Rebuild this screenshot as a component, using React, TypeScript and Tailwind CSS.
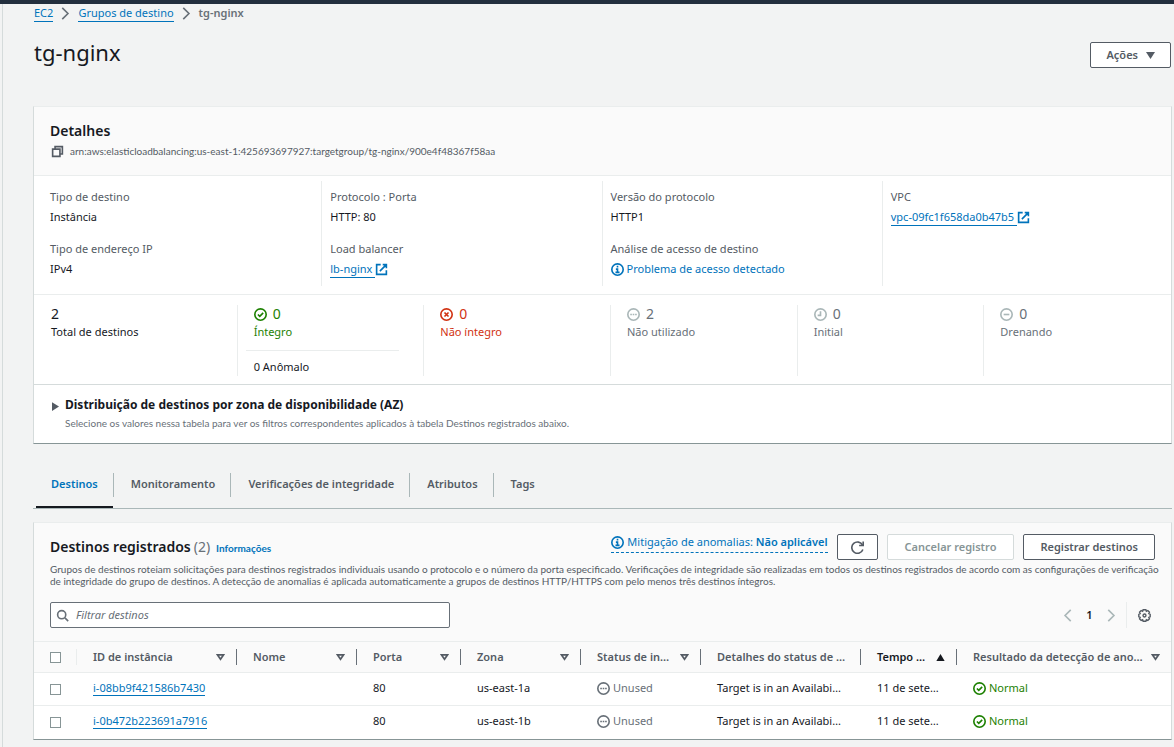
import { useState } from "react";
import type { ReactNode } from "react";
import { clsx } from "clsx";

type IconProps = { className?: string };

function Svg({ className, children }: IconProps & { children: ReactNode }) {
  return (
    <svg
      viewBox="0 0 16 16"
      fill="none"
      stroke="currentColor"
      strokeWidth="2"
      aria-hidden="true"
      className={clsx("shrink-0", className ?? "size-[13px]")}
    >
      {children}
    </svg>
  );
}

const CheckIcon = ({ className }: IconProps) => (
  <Svg className={className}>
    <circle cx="8" cy="8" r="7" />
    <path d="M4.8 8l2.3 2.3 4.2-4.3" />
  </Svg>
);

const ErrorIcon = ({ className }: IconProps) => (
  <Svg className={className}>
    <circle cx="8" cy="8" r="7" />
    <path d="M5.5 5.5l5 5M10.5 5.5l-5 5" />
  </Svg>
);

const DotsIcon = ({ className }: IconProps) => (
  <Svg className={className}>
    <circle cx="8" cy="8" r="7" />
    <path d="M4 8h2M7 8h2M10 8h2" />
  </Svg>
);

const MinusIcon = ({ className }: IconProps) => (
  <Svg className={className}>
    <circle cx="8" cy="8" r="7" />
    <path d="M4.5 8h7" />
  </Svg>
);

const ClockIcon = ({ className }: IconProps) => (
  <Svg className={className}>
    <circle cx="8" cy="8" r="7" />
    <path d="M8 4v5H4.5" />
  </Svg>
);

const InfoIcon = ({ className }: IconProps) => (
  <Svg className={className}>
    <circle cx="8" cy="8" r="7" />
    <path d="M8 3.5v2M6 7.5h2V12M5.5 11.5h5" />
  </Svg>
);

const ExternalIcon = ({ className }: IconProps) => (
  <Svg className={className}>
    <path d="M7 2H2v12h12V9M9.5 2H14v4.5M14 2L6 10" />
  </Svg>
);

const CopyIcon = ({ className }: IconProps) => (
  <Svg className={className}>
    <path d="M2 5h9v9H2z" />
    <path d="M5 5V2h9v9h-3" />
  </Svg>
);

const ChevronIcon = ({ className }: IconProps) => (
  <Svg className={className}>
    <path d="M4 1l7 7-7 7" />
  </Svg>
);

const SearchIcon = ({ className }: IconProps) => (
  <Svg className={className}>
    <circle cx="7" cy="7" r="5" />
    <path d="M11 11l4 4" />
  </Svg>
);

const RefreshIcon = ({ className }: IconProps) => (
  <Svg className={className}>
    <path d="M10 5.5h5v-5" />
    <path d="M14.2 5A7 7 0 1 0 14.6 10.5" />
  </Svg>
);

const GearIcon = ({ className }: IconProps) => (
  <Svg className={className}>
    <path
      strokeWidth="1.7"
      d="M6.3 1h3.4l.6 1.8 1.8-.8 2 2-.8 1.7 1.7.6v3.4l-1.7.6.8 1.8-2 2-1.8-.8-.6 1.7H6.3l-.6-1.7-1.8.8-2-2 .8-1.8L1 9.7V6.3l1.7-.6L1.9 4l2-2 1.8.8z"
    />
    <circle cx="8" cy="8" r="1.8" strokeWidth="1.7" />
  </Svg>
);

function SortIcon({ active }: { active?: boolean }) {
  return (
    <svg
      viewBox="0 0 10 8"
      fill={active ? "currentColor" : "none"}
      stroke="currentColor"
      strokeWidth="2"
      aria-hidden="true"
      className="h-[7px] w-[9px] shrink-0"
    >
      {active ? <path d="M2 7h6L5 2z" /> : <path d="M1.6 1h6.8L5 6z" />}
    </svg>
  );
}

const linkClass = "border-b border-[#0073bb] text-[#0073bb]";

const smallText = "font-[Lato,sans-serif] text-[10px]";

function ExternalLink({ children }: { children: ReactNode }) {
  return (
    <a href="#" className="flex items-center text-[#0073bb]">
      <span className="border-b border-[#0073bb] pr-[3px]">{children}</span>
      <ExternalIcon />
    </a>
  );
}

type Field = { label: string; value: ReactNode };

const detailColumns: Field[][] = [
  [
    { label: "Tipo de destino", value: "Instância" },
    { label: "Tipo de endereço IP", value: "IPv4" },
  ],
  [
    { label: "Protocolo : Porta", value: "HTTP: 80" },
    { label: "Load balancer", value: <ExternalLink>lb-nginx</ExternalLink> },
  ],
  [
    { label: "Versão do protocolo", value: "HTTP1" },
    {
      label: "Análise de acesso de destino",
      value: (
        <button type="button" className="flex items-center gap-[3px] text-[#0073bb]">
          <InfoIcon />
          Problema de acesso detectado
        </button>
      ),
    },
  ],
  [{ label: "VPC", value: <ExternalLink>vpc-09fc1f658da0b47b5</ExternalLink> }],
];

const pendingIcon = "size-[13px] text-[#aab7b8]";

const summary = [
  { label: "Total de destinos", count: 2, icon: null, color: "text-[#16191f]" },
  { label: "Íntegro", count: 0, icon: <CheckIcon />, color: "text-[#1d8102]", note: "0 Anômalo" },
  { label: "Não íntegro", count: 0, icon: <ErrorIcon />, color: "text-[#d13212]" },
  { label: "Não utilizado", count: 2, icon: <DotsIcon className={pendingIcon} />, color: "text-[#687078]" },
  { label: "Initial", count: 0, icon: <ClockIcon className={pendingIcon} />, color: "text-[#687078]" },
  { label: "Drenando", count: 0, icon: <MinusIcon className={pendingIcon} />, color: "text-[#687078]" },
];

const tabs = ["Destinos", "Monitoramento", "Verificações de integridade", "Atributos", "Tags"];

const columns = [
  { label: "ID de instância", width: "w-[160px]", sortable: true },
  { label: "Nome", width: "w-[120px]", sortable: true },
  { label: "Porta", width: "w-[104px]", sortable: true },
  { label: "Zona", width: "w-[120px]", sortable: true },
  { label: "Status de in…", width: "w-[120px]", sortable: true },
  { label: "Detalhes do status de …", width: "w-[160px]", sortable: false },
  { label: "Tempo …", width: "w-[96px]", sortable: true, sorted: true },
  { label: "Resultado da detecção de ano…", width: "", sortable: true },
];

const rows = [
  { id: "i-08bb9f421586b7430", zone: "us-east-1a" },
  { id: "i-0b472b223691a7916", zone: "us-east-1b" },
];

const cardClass =
  "border border-t-[#eaeded] border-r-[#d5dbdb] border-b-[#879596] border-l-[#d5dbdb] bg-white";

const checkboxClass =
  "block size-[11px] appearance-none border border-[#879596] bg-white checked:bg-[#0073bb]";

const cellClass = "p-0 pb-[2px] pl-4 whitespace-nowrap";

function Details() {
  return (
    <section className={cardClass}>
      <header className="border-b border-[#eaeded] bg-[#fafafa] px-4 pt-[14px] pb-4">
        <h2 className="text-[14px] leading-5 font-semibold">Detalhes</h2>
        <div className={clsx("mt-[2px] flex h-4 items-center gap-[6px] pl-px text-[#545b64]", smallText)}>
          <button type="button" aria-label="Copiar ARN">
            <CopyIcon />
          </button>
          arn:aws:elasticloadbalancing:us-east-1:425693697927:targetgroup/tg-nginx/900e4f48367f58aa
        </div>
      </header>

      <div className="grid grid-cols-4 border-b border-[#eaeded] px-2 pt-[5px] pb-2">
        {detailColumns.map((fields, index) => (
          <dl
            key={index}
            className={clsx(
              "space-y-4 pt-2 pb-[9px] pl-2",
              index < detailColumns.length - 1 && "border-r border-[#eaeded]",
            )}
          >
            {fields.map((field) => (
              <div key={field.label}>
                <dt className="leading-4 text-[#545b64]">{field.label}</dt>
                <dd className="mt-1 flex h-4 items-center leading-4">{field.value}</dd>
              </div>
            ))}
          </dl>
        ))}
      </div>

      <div className="grid grid-cols-6 border-b border-[#d5dbdb] pt-[10px] pb-2 pl-[17px]">
        {summary.map((item, index) => (
          <div
            key={item.label}
            className={clsx(
              "h-[71px]",
              item.color,
              index > 0 && "pl-4",
              index < summary.length - 1 && "border-r border-[#eaeded]",
            )}
          >
            <p className="flex h-[18px] items-center gap-[6px] text-[14px]">
              {item.icon}
              {item.count}
            </p>
            <p className="leading-[18px]">{item.label}</p>
            {item.note ? (
              <p className="mt-[9px] mr-6 -ml-2 border-t border-[#eaeded] pt-2 pl-2 leading-4 text-[#16191f]">
                {item.note}
              </p>
            ) : null}
          </div>
        ))}
      </div>

      <div className="flex gap-[6px] px-4 pt-[11px] pb-3">
        <button type="button" aria-label="Expandir distribuição" className="mt-[6px] ml-[2px] self-start">
          <svg viewBox="0 0 8 10" className="h-[9px] w-[7px] fill-[#545b64]" aria-hidden="true">
            <path d="M0 0l8 5-8 5z" />
          </svg>
        </button>
        <div>
          <h3 className="text-[12px] leading-[18px] font-bold">
            Distribuição de destinos por zona de disponibilidade (AZ)
          </h3>
          <p className={clsx("mt-px leading-4 text-[#687078]", smallText)}>
            Selecione os valores nessa tabela para ver os filtros correspondentes aplicados à tabela Destinos
            registrados abaixo.
          </p>
        </div>
      </div>
    </section>
  );
}

function Tabs() {
  const [active, setActive] = useState("Destinos");

  return (
    <div role="tablist" className="mt-[29px] flex border-b border-[#aab7b8] pl-px">
      {tabs.map((tab, index) => (
        <div key={tab} className="flex items-start">
          <button
            type="button"
            role="tab"
            aria-selected={tab === active}
            onClick={() => setActive(tab)}
            className={clsx(
              "ml-[2px] h-[35px] border-b-2 px-[15px] pb-[11px] font-semibold",
              tab === active ? "border-[#16191f] text-[#0073bb]" : "border-transparent text-[#545b64]",
            )}
          >
            {tab}
          </button>
          {index < tabs.length - 1 ? <span className="h-6 w-px bg-[#aab7b8]" /> : null}
        </div>
      ))}
    </div>
  );
}

function Targets() {
  const [filter, setFilter] = useState("");

  return (
    <section className={clsx(cardClass, "mt-[13px]")}>
      <header className="bg-[#fafafa] px-4 pt-[11px] pb-[13px]">
        <div className="flex items-start justify-between">
          <h2 className="mt-[3px] flex items-baseline text-[14px] leading-5 font-semibold">
            Destinos registrados
            <span className="ml-[3px] font-normal text-[#687078]">(2)</span>
            <a href="#" className={clsx("ml-[6px] font-bold text-[#0073bb]", smallText)}>
              Informações
            </a>
          </h2>
          <div className="flex items-start gap-[9px]">
            <button
              type="button"
              className="flex items-center gap-[3px] border-b border-dashed border-[#0073bb] pb-[2px] leading-4 text-[#0073bb]"
            >
              <InfoIcon />
              <span>
                Mitigação de anomalias: <b className="font-semibold">Não aplicável</b>
              </span>
            </button>
            <button
              type="button"
              aria-label="Atualizar"
              className="flex h-[26px] w-[41px] items-center justify-center rounded-xs border border-[#545b64] bg-white text-[#545b64]"
            >
              <RefreshIcon />
            </button>
            <button
              type="button"
              disabled
              className="h-[26px] rounded-xs border border-[#d5dbdb] bg-white px-[17px] font-semibold text-[#879596]"
            >
              Cancelar registro
            </button>
            <button
              type="button"
              className="h-[26px] rounded-xs border border-[#545b64] bg-white px-4 font-semibold text-[#545b64]"
            >
              Registrar destinos
            </button>
          </div>
        </div>
        <p className={clsx("-mr-3 mt-[3px] leading-3 text-[#545b64]", smallText)}>
          Grupos de destinos roteiam solicitações para destinos registrados individuais usando o protocolo e o
          número da porta especificado. Verificações de integridade são realizadas em todos os destinos
          registrados de acordo com as configurações de verificação de integridade do grupo de destinos. A
          detecção de anomalias é aplicada automaticamente a grupos de destinos HTTP/HTTPS com pelo menos três
          destinos íntegros.
        </p>
        <div className="mt-[15px] flex items-center justify-between">
          <label className="flex h-[26px] w-[400px] items-center gap-[7px] rounded-xs border border-[#687078] bg-white px-[5px] text-[#687078]">
            <SearchIcon />
            <input
              type="search"
              aria-label="Filtrar destinos"
              placeholder="Filtrar destinos"
              value={filter}
              onChange={(event) => setFilter(event.target.value)}
              className="min-w-0 flex-1 outline-none placeholder:text-[#687078] placeholder:italic"
            />
          </label>
          <div className="flex h-[26px] items-center pr-1">
            <button type="button" aria-label="Página anterior" className="text-[#aab7b8]">
              <ChevronIcon className="size-[13px] rotate-180" />
            </button>
            <button type="button" className="w-[31px] font-semibold">
              1
            </button>
            <button type="button" aria-label="Próxima página" className="text-[#aab7b8]">
              <ChevronIcon />
            </button>
            <span className="mr-[11px] ml-2 h-[26px] w-px bg-[#eaeded]" />
            <button type="button" aria-label="Preferências" className="text-[#545b64]">
              <GearIcon />
            </button>
          </div>
        </div>
      </header>

      <table className="w-full table-fixed border-collapse">
        <colgroup>
          <col className="w-[43px]" />
          {columns.map((column) => (
            <col key={column.label} className={column.width} />
          ))}
        </colgroup>
        <thead>
          <tr className="h-[31px] border-y border-[#eaeded] bg-[#fafafa] text-left text-[#545b64]">
            <th className="p-0">
              <div className="flex h-4 items-center border-r border-[#eaeded] pl-4">
                <input type="checkbox" aria-label="Selecionar todos" className={checkboxClass} />
              </div>
            </th>
            {columns.map((column, index) => (
              <th key={column.label} className="p-0 font-semibold">
                <div
                  className={clsx(
                    "flex h-4 items-center justify-between pr-[11px] pl-4 whitespace-nowrap",
                    index < columns.length - 1 && "border-r border-[#687078]",
                    column.sorted && "text-[#16191f]",
                  )}
                >
                  {column.label}
                  {column.sortable ? (
                    <button type="button" aria-label={`Ordenar por ${column.label}`}>
                      <SortIcon active={column.sorted} />
                    </button>
                  ) : null}
                </div>
              </th>
            ))}
          </tr>
        </thead>
        <tbody>
          {rows.map((row) => (
            <tr key={row.id} className="h-[33px] border-t border-[#eaeded]">
              <td className="p-0 pl-4">
                <input type="checkbox" aria-label={`Selecionar ${row.id}`} className={checkboxClass} />
              </td>
              <td className={cellClass}>
                <a href="#" className={linkClass}>
                  {row.id}
                </a>
              </td>
              <td />
              <td className={cellClass}>80</td>
              <td className={cellClass}>{row.zone}</td>
              <td className={cellClass}>
                <span className="flex items-center gap-[3px] text-[#687078]">
                  <DotsIcon />
                  Unused
                </span>
              </td>
              <td className={cellClass}>Target is in an Availabi…</td>
              <td className={cellClass}>11 de sete…</td>
              <td className={cellClass}>
                <span className="flex items-center gap-[3px] text-[#1d8102]">
                  <CheckIcon />
                  Normal
                </span>
              </td>
            </tr>
          ))}
        </tbody>
      </table>
    </section>
  );
}

export default function App() {
  return (
    <div className="flex min-h-screen flex-col border-t-4 border-[#232f3e] bg-[#f2f3f3] font-['Noto_Sans',sans-serif] text-[11px] leading-4 text-[#16191f]">
      <main className="ml-[2px] flex-1 border-l border-[#d5dbdb] pr-[2px] pb-2 pl-[30px]">
        <nav aria-label="Trilha" className="flex h-[18px] items-center gap-[6px] pl-px">
          <a href="#" className={linkClass}>
            EC2
          </a>
          <ChevronIcon className="size-[13px] text-[#687078]" />
          <a href="#" className={linkClass}>
            Grupos de destino
          </a>
          <ChevronIcon className="size-[13px] text-[#687078]" />
          <span className="font-semibold text-[#687078]">tg-nginx</span>
        </nav>

        <div className="mt-4 mb-[38px] flex items-start justify-between pr-px pl-px">
          <h1 className="text-[22px] leading-7">tg-nginx</h1>
          <button
            type="button"
            className="mt-1 flex h-[26px] items-center gap-2 rounded-xs border border-[#545b64] bg-white px-[15px] font-semibold text-[#545b64]"
          >
            Ações
            <svg viewBox="0 0 9 7" className="h-[7px] w-[9px] fill-current" aria-hidden="true">
              <path d="M0 0h9L4.5 7z" />
            </svg>
          </button>
        </div>

        <Details />
        <Tabs />
        <Targets />
      </main>
    </div>
  );
}
